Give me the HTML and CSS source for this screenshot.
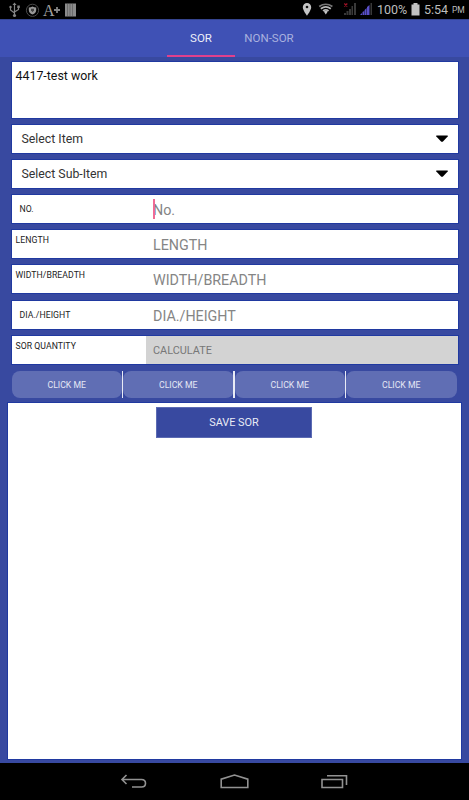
FILE: index.html
```
<!DOCTYPE html>
<html lang="en">
<head>
    <meta charset="UTF-8">
    <meta name="viewport" content="width=device-width, initial-scale=1.0">
    <title>SOR</title>
    <link rel="stylesheet" href="styles.css">
</head>
<body>
    <div class="status-bar">
        <svg class="status-left" width="80" height="19" viewBox="0 0 80 19" fill="none" stroke="#858585">
            <!-- usb -->
            <path d="M14.5 4v11M10.5 7v3l4 3M18.5 6.500v3l-4 2.500" stroke-width="1.200"/>
            <path d="M14.500 2.500l-2 2.500h4z" fill="#858585" stroke="none"/>
            <circle cx="14.500" cy="15.500" r="1.600" fill="#858585" stroke="none"/>
            <circle cx="10.500" cy="7" r="1.200" fill="#858585" stroke="none"/>
            <path d="M17.300 5.500h2.500v2.500h-2.500z" fill="#858585" stroke="none"/>
            <!-- shield -->
            <circle cx="32.500" cy="10.300" r="6.100" stroke="#4c4c4c"/>
            <path d="M28.800 7.500q2 0 3.700-1q1.700 1 3.700 1v2.500q0 3-3.700 4.500q-3.700-1.500-3.700-4.500z" fill="#999" stroke="none"/>
            <path d="M31 8.700h3v1.500l-1.500 2l-1.500-2z" fill="#444" stroke="none"/>
            <path d="M54 10h6M57 7v6" stroke-width="1.800"/>
            <!-- barcode -->
            <path d="M65 3.500h11v13h-11z" fill="#8b8b8b" stroke="none"/>
            <path d="M67.500 4v12M70 4v12M72.500 4v12" stroke="#555" stroke-width=".6"/>
        </svg>
        <span class="letter-a">A</span>
        <svg class="status-right" width="74" height="19" viewBox="300 0 74 19">
            <path d="M307 3a4.200 4.200 0 0 0-4.200 4.300c0 3 4.200 8.500 4.200 8.500s4.200-5.500 4.200-8.500a4.200 4.200 0 0 0-4.200-4.300z" fill="#c4c4c4"/>
            <circle cx="307" cy="7" r="1.300" fill="#111"/>
            <g fill="none" stroke="#b8b8b8" stroke-width="1.700">
                <path d="M319.200 6.500q6.500-4.500 13.200 0" stroke="#777"/>
                <path d="M320.800 8.700q5-3.600 10 0"/>
                <path d="M323 10.900q2.800-2 5.600 0"/>
            </g>
            <path d="M323.800 11.500q2-1.300 4 0l-2 3z" fill="#c4c4c4"/>
            <path d="M344 15v-2h2v2zM346.500 15v-4h2v4zM349 15v-6h2v6zM351.500 15v-9h1.500v9zM354 15v-12h2v12z" fill="#393939"/>
            <path d="M344.300 3.500l3 3M347.300 3.500l-3 3" stroke="#a01226" stroke-width="1.200"/>
            <path d="M360 15l2-2v2zM362.500 15v-3l1.700-1v4zM364.600 15v-5l2-2v7zM367 15v-8l2.500-2v10z" fill="#594fc8"/>
            <path d="M370.500 15v-12h1.500v12z" fill="#393939"/>
        </svg>
        <span class="percent">100%</span>
        <svg class="battery" width="9" height="13" viewBox="0 0 9 13"><path d="M2.500 0h4v1.500h2v11h-8v-11h2z" fill="#c2c2c2"/></svg>
        <span class="clock">5:54</span><span class="pm">PM</span>
    </div>

    <div class="tabs">
        <div class="tab active">SOR</div>
        <div class="tab">NON-SOR</div>
    </div>

    <div class="content">
        <div class="form">
            <div class="box work">4417-test work</div>
            <div class="box select"><span>Select Item</span><svg width="12" height="8" viewBox="0 0 12 8"><path d="M.3.500h11.400v1l-5 5.300h-1.400l-5-5.300z"/></svg></div>
            <div class="box select"><span>Select Sub-Item</span><svg width="12" height="8" viewBox="0 0 12 8"><path d="M.3.500h11.400v1l-5 5.300h-1.400l-5-5.300z"/></svg></div>
            <div class="box row">
                <div class="label middle">NO.</div>
                <div class="field"><span class="cursor"></span>No.</div>
            </div>
            <div class="box row">
                <div class="label">LENGTH</div>
                <div class="field">LENGTH</div>
            </div>
            <div class="box row">
                <div class="label">WIDTH/BREADTH</div>
                <div class="field">WIDTH/BREADTH</div>
            </div>
            <div class="box row">
                <div class="label middle">DIA./HEIGHT</div>
                <div class="field">DIA./HEIGHT</div>
            </div>
            <div class="box row">
                <div class="label">SOR QUANTITY</div>
                <div class="field calculate">CALCULATE</div>
            </div>
            <div class="buttons">
                <div class="button">CLICK ME</div>
                <div class="button">CLICK ME</div>
                <div class="button">CLICK ME</div>
                <div class="button">CLICK ME</div>
            </div>
        </div>
        <div class="panel">
            <div class="save">SAVE SOR</div>
        </div>
    </div>

    <div class="nav-bar">
        <svg width="27" height="16" viewBox="0 0 27 16"><path d="M6.500 1l-4.500 4.500l4.500 4.500M2 5.500h19.500q4 0 4 3.700t-4 3.800h-9.500"/></svg>
        <svg width="29" height="16" viewBox="0 0 29 16"><path d="M1.200 13.500v-8.300l13.300-4.200l13.300 4.200v8.300z"/></svg>
        <svg width="27" height="16" viewBox="0 0 27 16"><path d="M1 5.500h20.500v8h-20.500zM6 1.700h19.500v9.300"/></svg>
    </div>
</body>
</html>
```
FILE: styles.css
```
* {
    box-sizing: border-box;
}
body {
    margin: 0;
    width: 469px;
    height: 800px;
    display: flex;
    flex-direction: column;
    overflow: hidden;
    background: #3849a0;
    font-family: Roboto, sans-serif;
}
.status-bar {
    position: relative;
    height: 19px;
    flex: none;
    display: flex;
    align-items: center;
    background: black;
    color: #bdbdbd;
    line-height: 19px;
}
.letter-a {
    position: absolute;
    left: 43px;
    top: 1px;
    font-family: "Liberation Serif", serif;
    font-size: 16px;
    color: #a0a0a0;
}
.status-right {
    margin-left: 220px;
}
.percent {
    width: 37px;
    padding-left: 3px;
    font-size: 12.5px;
    white-space: nowrap;
}
.battery {
    margin-bottom: 1px;
}
.clock {
    margin-left: 4px;
    width: 28px;
    font-size: 12.5px;
}
.pm {
    padding-top: 2px;
    font-size: 8.5px;
}
.tabs {
    height: 38px;
    flex: none;
    display: flex;
    padding-left: 167px;
    background: #3f51b5;
    border-top: 1px solid #35448f;
}
.tab {
    width: 68px;
    height: 37px;
    line-height: 37px;
    text-align: center;
    font-size: 11.5px;
    color: #aab2df;
}
.active {
    color: #eceef8;
    border-bottom: 2px solid #e0408d;
}
.content {
    flex: 1;
    display: flex;
    flex-direction: column;
    padding: 5px 8px 4px;
}
.form {
    display: flex;
    flex-direction: column;
    gap: 7.2px;
    width: 446px;
    margin-left: 3.5px;
    height: 340.5px;
}
.box {
    height: 28px;
    flex: none;
    background: white;
    box-shadow: 0 0 0 1px #2039a0;
}
.work {
    height: 55.5px;
    padding: 5px 4px;
    font-size: 12.4px;
    line-height: 17px;
    color: #111;
}
.select {
    display: flex;
    align-items: center;
    justify-content: space-between;
    padding: 0 10px;
    font-size: 12.3px;
    color: #333;
}
.row {
    display: flex;
}
.label {
    width: 134px;
    padding: 5px 4px;
    font-size: 8.7px;
    line-height: 11px;
    letter-spacing: 0.05px;
    color: #222;
}
.middle {
    padding: 9px 8px;
}
.field {
    position: relative;
    flex: 1;
    padding-left: 7.5px;
    font-size: 14.3px;
    line-height: 30px;
    color: #858585;
}
.calculate {
    background: #d3d3d3;
    font-size: 10.9px;
    line-height: 29px;
    color: #777;
}
.cursor {
    position: absolute;
    left: 7.5px;
    top: 4px;
    width: 1.5px;
    height: 20px;
    background: #f06b95;
}
.buttons {
    display: flex;
    height: 27px;
}
.button {
    flex: 1;
    height: 27px;
    margin-right: 1px;
    border-radius: 8px;
    background: #606eb4;
    color: #e5e8f4;
    font-size: 8.7px;
    line-height: 28px;
    text-align: center;
    position: relative;
}
.button + .button::before {
    content: "";
    position: absolute;
    left: -1.5px;
    top: 0;
    width: 1.5px;
    height: 27px;
    background: #e9ebf5;
}
.panel {
    width: 453px;
    flex: 1;
    padding-top: 4px;
    background: white;
    box-shadow: 0 0 0 1px #2039a0;
}
.save {
    width: 156px;
    height: 31px;
    margin-left: 148px;
    background: #3849a0;
    border: 1px solid #5c6bb3;
    color: #e9ebf5;
    font-size: 10.9px;
    line-height: 30px;
    text-align: center;
}
.nav-bar {
    height: 37px;
    flex: none;
    display: flex;
    justify-content: space-between;
    align-items: center;
    padding: 1px 121px 0 120px;
    background: black;
}
.nav-bar svg {
    fill: none;
    stroke: #929292;
    stroke-width: 1.6;
}
```
